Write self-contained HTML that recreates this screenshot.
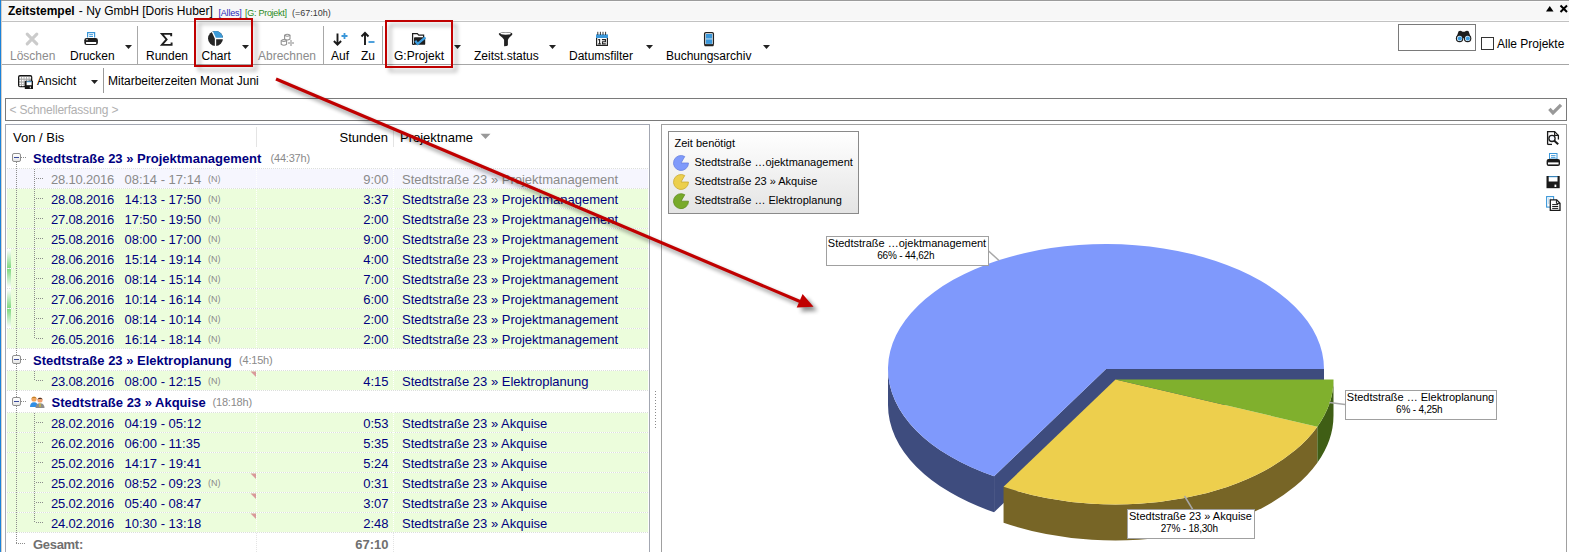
<!DOCTYPE html>
<html><head><meta charset="utf-8"><title>Zeitstempel</title>
<style>
html,body{margin:0;padding:0;}
body{width:1569px;height:552px;overflow:hidden;position:relative;background:#fff;font-family:"Liberation Sans", sans-serif;}
.t{position:absolute;white-space:pre;font-family:"Liberation Sans", sans-serif;}
.r{position:absolute;}
svg{position:absolute;overflow:visible;}
</style></head><body>

<div class="r" style="left:0px;top:0px;width:1569px;height:1px;background:#9c9c9c;"></div>
<div class="r" style="left:2px;top:1px;width:1567px;height:1px;background:#fcfcfc;"></div>
<div class="r" style="left:2px;top:2px;width:1567px;height:18px;background:#f7f7f7;"></div>
<div class="r" style="left:2px;top:20px;width:1567px;height:1px;background:#fdfdfd;"></div>
<div class="r" style="left:2px;top:21px;width:1567px;height:1px;background:#c2c2c2;"></div>
<div class="t " style="left:8px;top:4.84px;font-size:12px;line-height:12px;font-weight:700;color:#000;">Zeitstempel</div>
<div class="t " style="left:75.5px;top:4.84px;font-size:12px;line-height:12px;font-weight:400;color:#000;"> - Ny GmbH [Doris Huber]</div>
<div class="t " style="left:218.5px;top:8.58px;font-size:9px;line-height:9px;font-weight:400;color:#2828b8;letter-spacing:-0.2px;">[Alles]</div>
<div class="t " style="left:245px;top:8.58px;font-size:9px;line-height:9px;font-weight:400;color:#2a8a1a;letter-spacing:-0.27px;">[G: Projekt]</div>
<div class="t " style="left:292px;top:8.58px;font-size:9px;line-height:9px;font-weight:400;color:#3a3a3a;">(=67:10h)</div>
<svg style="left:1545px;top:5px" width="10" height="8"><polygon points="1,6.5 8.5,6.5 4.75,1" fill="#000"/></svg>
<svg style="left:1559px;top:4px" width="10" height="10"><path d="M1.5 1.5 L8 8 M8 1.5 L1.5 8" stroke="#000" stroke-width="2"/></svg>
<div class="r" style="left:2px;top:64px;width:1567px;height:1px;background:#a6a6a6;"></div>
<svg style="left:25px;top:32px" width="14" height="14"><path d="M2.2 2.2 L11.8 11.8 M11.8 2.2 L2.2 11.8" stroke="#cbcbcb" stroke-width="3.1" stroke-linecap="round"/></svg>
<div class="t " style="left:10px;top:50.34px;font-size:12px;line-height:12px;font-weight:400;color:#8c8c8c;">Löschen</div>
<svg style="left:84px;top:31px" width="15" height="15">
<path d="M3.6 6.6 V1.6 H10.6 V6.6" fill="#fff" stroke="#3b97d9" stroke-width="1.2"/>
<rect x="5.2" y="3.2" width="3.8" height="1" fill="#3b97d9"/><rect x="5.2" y="5" width="3.8" height="1" fill="#3b97d9"/>
<rect x="0.3" y="6.9" width="13.6" height="7.1" rx="2.3" fill="#1e1e1e"/>
<rect x="2" y="10.9" width="10.2" height="2.1" rx="0.4" fill="#fff"/>
<rect x="2.1" y="8.2" width="1.8" height="1" fill="#e0e0e0"/>
</svg>
<div class="t " style="left:70px;top:50.34px;font-size:12px;line-height:12px;font-weight:400;color:#000;">Drucken</div>
<svg style="left:125px;top:45px" width="8" height="5"><polygon points="0,0 7,0 3.5,4" fill="#222"/></svg>
<div class="r" style="left:137px;top:26px;width:1px;height:38px;background:#a8a8a8;"></div>
<svg style="left:160px;top:32px" width="14" height="15"><path d="M11.2 4.2 V1.9 H1.9 L6.6 7.4 L1.9 12.9 H11.6 V10.6" fill="none" stroke="#1e1e1e" stroke-width="1.9" stroke-linejoin="miter" stroke-miterlimit="3"/></svg>
<div class="t " style="left:146px;top:50.34px;font-size:12px;line-height:12px;font-weight:400;color:#000;">Runden</div>
<svg style="left:207px;top:30px" width="17" height="17">
<circle cx="8.5" cy="8.5" r="7.5" fill="#262626"/>
<path d="M8.5 8.5 L16.0 8.5 A7.5 7.5 0 0 0 5.35 1.69 Z" fill="#3d9bd8"/>
<path d="M5.35 1.69 L8.5 8.5 L17.0 8.5 M8.5 8.5 V17.0" fill="none" stroke="#fff" stroke-width="1.3"/>
</svg>
<div class="t " style="left:201.5px;top:50.34px;font-size:12px;line-height:12px;font-weight:400;color:#000;">Chart</div>
<svg style="left:242px;top:45px" width="8" height="5"><polygon points="0,0 7,0 3.5,4" fill="#222"/></svg>
<svg style="left:280px;top:33px" width="16" height="14">
<g fill="#fff" stroke="#929292" stroke-width="1.1">
<path d="M4.6 2.3 Q7.3 0.3 10 2.3 V6 Q7.3 8 4.6 6 Z"/><path d="M4.6 2.3 Q7.3 4.2 10 2.3" fill="none"/>
<path d="M1.2 7.6 Q3.9 5.6 6.6 7.6 V11.2 Q3.9 13.2 1.2 11.2 Z"/><path d="M1.2 7.6 Q3.9 9.5 6.6 7.6" fill="none"/>
</g>
<path d="M11 7 V13 M8 10 H14" stroke="#c2c2c2" stroke-width="1.9"/>
</svg>
<div class="t " style="left:258px;top:50.34px;font-size:12px;line-height:12px;font-weight:400;color:#8c8c8c;">Abrechnen</div>
<div class="r" style="left:323px;top:26px;width:1px;height:38px;background:#a8a8a8;"></div>
<svg style="left:332px;top:31px" width="16" height="16">
<path d="M5.5 2.5 V13.5 M1.9 10 L5.5 13.6 L9.1 10" fill="none" stroke="#1a1a1a" stroke-width="1.9"/>
<path d="M12.5 2 V8 M9.5 5 H15.5" stroke="#3b97d9" stroke-width="1.8"/>
</svg>
<div class="t " style="left:331px;top:50.34px;font-size:12px;line-height:12px;font-weight:400;color:#000;">Auf</div>
<svg style="left:360px;top:31px" width="16" height="16">
<path d="M5 14 V2 M1.5 5.5 L5 1.8 L8.5 5.5" fill="none" stroke="#1a1a1a" stroke-width="1.9"/>
<path d="M8.5 11 H14.5" stroke="#3b97d9" stroke-width="1.8"/>
</svg>
<div class="t " style="left:361px;top:50.34px;font-size:12px;line-height:12px;font-weight:400;color:#000;">Zu</div>
<div class="r" style="left:382px;top:26px;width:1px;height:38px;background:#a8a8a8;"></div>
<svg style="left:411px;top:32px" width="17" height="15">
<path d="M1.6 12.4 V1.6 H6.3 L7.8 3.1 H12.6 V5.5" fill="none" stroke="#1e1e1e" stroke-width="1.25"/>
<path d="M1.6 12.4 H3.5" fill="none" stroke="#1e1e1e" stroke-width="1.25"/>
<rect x="3" y="5.2" width="11.2" height="7.6" rx="0.9" fill="#1e1e1e"/>
<path d="M4.3 8.8 L6.6 11.9 L14.4 5.4" fill="none" stroke="#3d9ee0" stroke-width="2.3"/>
</svg>
<div class="t " style="left:394px;top:50.34px;font-size:12px;line-height:12px;font-weight:400;color:#000;">G:Projekt</div>
<svg style="left:454px;top:44.5px" width="8" height="5"><polygon points="0,0 7,0 3.5,4" fill="#222"/></svg>
<svg style="left:498px;top:31px" width="16" height="16">
<path d="M0.8 2.9 C0.8 0.6 14.4 0.6 14.4 2.9 C14.4 4.5 10.2 6.5 9.9 9.2 V14.2 Q9.5 15.2 6.1 15.2 V9.2 C5.8 6.5 0.8 4.5 0.8 2.9 Z" fill="#222"/>
<ellipse cx="7.6" cy="2.6" rx="5.3" ry="1.15" fill="#fff"/>
</svg>
<div class="t " style="left:474px;top:50.34px;font-size:12px;line-height:12px;font-weight:400;color:#000;">Zeitst.status</div>
<svg style="left:549px;top:44.5px" width="8" height="5"><polygon points="0,0 7,0 3.5,4" fill="#222"/></svg>
<svg style="left:595px;top:31px" width="15" height="16">
<rect x="1.6" y="4.6" width="10.8" height="9.8" fill="#fff" stroke="#222" stroke-width="1.2"/>
<rect x="1" y="3.4" width="12" height="3.6" fill="#3b97d9"/>
<path d="M2.8 0.8 V4 M5.4 0.8 V4 M8 0.8 V4 M10.6 0.8 V4" stroke="#222" stroke-width="0.9"/>
<path d="M3.2 8.6 H4.6 V12.9 M3.2 12.9 H5.8 M6.9 8.6 H10.4 V10.7 H7.5 V12.9 H10.8" fill="none" stroke="#222" stroke-width="1.15"/>
</svg>
<div class="t " style="left:569px;top:50.34px;font-size:12px;line-height:12px;font-weight:400;color:#000;">Datumsfilter</div>
<svg style="left:645.5px;top:44.5px" width="8" height="5"><polygon points="0,0 7,0 3.5,4" fill="#222"/></svg>
<svg style="left:703px;top:31px" width="12" height="16">
<rect x="1.6" y="1.6" width="8.8" height="12.4" rx="1.2" fill="#fff" stroke="#222" stroke-width="1.3"/>
<rect x="2.8" y="3" width="6.4" height="4.6" fill="#3b97d9"/><rect x="2.8" y="8.3" width="6.4" height="4.6" fill="#3b97d9"/>
<rect x="1.4" y="13.4" width="9.2" height="1.8" rx="0.6" fill="#222"/>
</svg>
<div class="t " style="left:666px;top:50.34px;font-size:12px;line-height:12px;font-weight:400;color:#000;">Buchungsarchiv</div>
<svg style="left:762.5px;top:44.5px" width="8" height="5"><polygon points="0,0 7,0 3.5,4" fill="#222"/></svg>
<div class="r" style="left:1398px;top:24px;width:76px;height:25px;border:1px solid #7a7a7a;background:#fff;"></div>
<svg style="left:1450px;top:26px" width="26" height="20">
<path d="M8.6 5.3 Q9.5 4.6 11.3 5 L12.6 5.8 H14.6 L15.9 5 Q17.7 4.6 18.6 5.3 L21 12 H6.2 Z" fill="#1e1e1e"/>
<circle cx="9.6" cy="12.4" r="3.75" fill="#1e1e1e"/><circle cx="17.6" cy="12.4" r="3.75" fill="#1e1e1e"/>
<circle cx="9.6" cy="12.4" r="2.6" fill="#d8ecfa"/><circle cx="17.6" cy="12.4" r="2.6" fill="#d8ecfa"/>
<circle cx="9.8" cy="12.6" r="2" fill="#3d9ee0"/><circle cx="17.8" cy="12.6" r="2" fill="#3d9ee0"/>
</svg>
<div class="r" style="left:1481px;top:37px;width:11px;height:11px;border:1px solid #333;background:#fff;"></div>
<div class="t " style="left:1497px;top:37.84px;font-size:12px;line-height:12px;font-weight:400;color:#000;">Alle Projekte</div>
<svg style="left:14px;top:72px" width="22" height="20">
<rect x="4.65" y="3.65" width="13" height="11" rx="1.3" fill="#a9a9a9" stroke="#151515" stroke-width="1.3"/>
<g fill="#fff"><rect x="5.5" y="5" width="1.6" height="1.6"/><rect x="8" y="5" width="1.6" height="1.6"/><rect x="10.5" y="5" width="1.6" height="1.6"/><rect x="13" y="5" width="1.6" height="1.6"/><rect x="15.5" y="5" width="1.6" height="1.6"/>
<rect x="5.5" y="7.8" width="1.6" height="1.6"/><rect x="8" y="7.8" width="1.6" height="1.6"/><rect x="10.5" y="7.8" width="1.6" height="1.6"/><rect x="13" y="7.8" width="1.6" height="1.6"/>
<rect x="5.5" y="10.6" width="1.6" height="1.6"/><rect x="8" y="10.6" width="1.6" height="1.6"/>
<rect x="5.5" y="13" width="1.6" height="1.2"/><rect x="8" y="13" width="1.6" height="1.2"/></g>
<rect x="10.8" y="8.8" width="8.2" height="8.2" fill="#151515"/>
<rect x="12.6" y="9.6" width="5" height="3.6" fill="#fff"/><rect x="12.6" y="9.3" width="5" height="0.9" fill="#3b97d9"/>
<rect x="15.8" y="14.6" width="1.2" height="1.6" fill="#ddd"/>
</svg>
<div class="t " style="left:37px;top:75.34px;font-size:12px;line-height:12px;font-weight:400;color:#000;">Ansicht</div>
<svg style="left:91px;top:79.5px" width="8" height="5"><polygon points="0,0 7,0 3.5,4" fill="#222"/></svg>
<div class="r" style="left:103px;top:68px;width:1px;height:25px;background:#9a9a9a;"></div>
<div class="t " style="left:108px;top:75.34px;font-size:12px;line-height:12px;font-weight:400;color:#000;">Mitarbeiterzeiten Monat Juni</div>
<div class="r" style="left:5px;top:98px;width:1560px;height:21px;border:1px solid #7a7a7a;background:#fff;"></div>
<div class="t " style="left:9.5px;top:104.34px;font-size:12px;line-height:12px;font-weight:400;color:#b0b0b0;letter-spacing:-0.2px;">&lt; Schnellerfassung &gt;</div>
<svg style="left:1547px;top:102px" width="16" height="14"><path d="M2.4 6.9 L6 10.9 L14 2.9" fill="none" stroke="#999" stroke-width="3.3"/></svg>
<div class="r" style="left:5px;top:124px;width:643px;height:435px;border:1px solid #a3a7b2;background:#fff;"></div>
<div class="t " style="left:13px;top:130.60px;font-size:13px;line-height:13px;font-weight:400;color:#000;">Von / Bis</div>
<div class="r" style="left:256px;top:127px;width:1px;height:20px;background:#e4e4e4;"></div>
<div class="r" style="left:393px;top:127px;width:1px;height:20px;background:#e4e4e4;"></div>
<div class="t " style="right:1181px;text-align:right;top:130.60px;font-size:13px;line-height:13px;font-weight:400;color:#000;">Stunden</div>
<div class="t " style="left:400px;top:130.60px;font-size:13px;line-height:13px;font-weight:400;color:#000;">Projektname</div>
<svg style="left:480px;top:133px" width="11" height="7"><polygon points="0.5,0.8 10.5,0.8 5.5,6" fill="#999999"/></svg>
<div class="r" style="left:21px;top:157px;width:5px;height:1px;background:repeating-linear-gradient(90deg,#8c8c8c 0 1px,transparent 1px 2px);"></div>
<div class="t " style="left:33px;top:151.80px;font-size:13px;line-height:13px;font-weight:700;color:#000080;">Stedtstraße 23 » Projektmanagement</div>
<div class="t " style="left:270.5px;top:152.99px;font-size:11px;line-height:11px;font-weight:400;color:#8a8a8a;letter-spacing:-0.2px;">(44:37h)</div>
<div class="r" style="left:7px;top:168px;width:641px;height:20px;background:#f6f6fe;"></div>
<div class="r" style="left:7px;top:168px;width:641px;height:1px;background:repeating-linear-gradient(90deg,#dcdfdc 0 1px,#ffffff 1px 2px);"></div>
<div class="r" style="left:256px;top:168px;width:1px;height:20px;background:repeating-linear-gradient(180deg,#ffffff 0 1px,transparent 1px 2px);"></div>
<div class="r" style="left:393px;top:168px;width:1px;height:20px;background:repeating-linear-gradient(180deg,#ffffff 0 1px,transparent 1px 2px);"></div>
<div class="r" style="left:36px;top:178px;width:7px;height:1px;background:repeating-linear-gradient(90deg,#8c8c8c 0 1px,transparent 1px 2px);"></div>
<div class="t " style="left:51px;top:172.80px;font-size:13px;line-height:13px;font-weight:400;color:#8a8a8a;letter-spacing:-0.2px;">28.10.2016</div>
<div class="t " style="left:124.5px;top:172.80px;font-size:13px;line-height:13px;font-weight:400;color:#8a8a8a;">08:14 - 17:14</div>
<div class="t " style="left:208px;top:174.98px;font-size:9px;line-height:9px;font-weight:400;color:#8a8a8a;">(N)</div>
<div class="t " style="right:1180.5px;text-align:right;top:172.80px;font-size:13px;line-height:13px;font-weight:400;color:#8a8a8a;">9:00</div>
<div class="t " style="left:402px;top:172.80px;font-size:13px;line-height:13px;font-weight:400;color:#8a8a8a;">Stedtstraße 23 » Projektmanagement</div>
<div class="r" style="left:7px;top:188px;width:641px;height:20px;background:#ecfddc;"></div>
<div class="r" style="left:7px;top:188px;width:641px;height:1px;background:repeating-linear-gradient(90deg,#dcdfdc 0 1px,#ffffff 1px 2px);"></div>
<div class="r" style="left:256px;top:188px;width:1px;height:20px;background:repeating-linear-gradient(180deg,#ffffff 0 1px,transparent 1px 2px);"></div>
<div class="r" style="left:393px;top:188px;width:1px;height:20px;background:repeating-linear-gradient(180deg,#ffffff 0 1px,transparent 1px 2px);"></div>
<div class="r" style="left:36px;top:198px;width:7px;height:1px;background:repeating-linear-gradient(90deg,#8c8c8c 0 1px,transparent 1px 2px);"></div>
<div class="t " style="left:51px;top:192.80px;font-size:13px;line-height:13px;font-weight:400;color:#000080;letter-spacing:-0.2px;">28.08.2016</div>
<div class="t " style="left:124.5px;top:192.80px;font-size:13px;line-height:13px;font-weight:400;color:#000080;">14:13 - 17:50</div>
<div class="t " style="left:208px;top:194.98px;font-size:9px;line-height:9px;font-weight:400;color:#8a8a8a;">(N)</div>
<div class="t " style="right:1180.5px;text-align:right;top:192.80px;font-size:13px;line-height:13px;font-weight:400;color:#000080;">3:37</div>
<div class="t " style="left:402px;top:192.80px;font-size:13px;line-height:13px;font-weight:400;color:#000080;">Stedtstraße 23 » Projektmanagement</div>
<div class="r" style="left:7px;top:208px;width:641px;height:20px;background:#ecfddc;"></div>
<div class="r" style="left:7px;top:208px;width:641px;height:1px;background:repeating-linear-gradient(90deg,#dcdfdc 0 1px,#ffffff 1px 2px);"></div>
<div class="r" style="left:256px;top:208px;width:1px;height:20px;background:repeating-linear-gradient(180deg,#ffffff 0 1px,transparent 1px 2px);"></div>
<div class="r" style="left:393px;top:208px;width:1px;height:20px;background:repeating-linear-gradient(180deg,#ffffff 0 1px,transparent 1px 2px);"></div>
<div class="r" style="left:36px;top:218px;width:7px;height:1px;background:repeating-linear-gradient(90deg,#8c8c8c 0 1px,transparent 1px 2px);"></div>
<div class="t " style="left:51px;top:212.80px;font-size:13px;line-height:13px;font-weight:400;color:#000080;letter-spacing:-0.2px;">27.08.2016</div>
<div class="t " style="left:124.5px;top:212.80px;font-size:13px;line-height:13px;font-weight:400;color:#000080;">17:50 - 19:50</div>
<div class="t " style="left:208px;top:214.98px;font-size:9px;line-height:9px;font-weight:400;color:#8a8a8a;">(N)</div>
<div class="t " style="right:1180.5px;text-align:right;top:212.80px;font-size:13px;line-height:13px;font-weight:400;color:#000080;">2:00</div>
<div class="t " style="left:402px;top:212.80px;font-size:13px;line-height:13px;font-weight:400;color:#000080;">Stedtstraße 23 » Projektmanagement</div>
<div class="r" style="left:7px;top:228px;width:641px;height:20px;background:#ecfddc;"></div>
<div class="r" style="left:7px;top:228px;width:641px;height:1px;background:repeating-linear-gradient(90deg,#dcdfdc 0 1px,#ffffff 1px 2px);"></div>
<div class="r" style="left:256px;top:228px;width:1px;height:20px;background:repeating-linear-gradient(180deg,#ffffff 0 1px,transparent 1px 2px);"></div>
<div class="r" style="left:393px;top:228px;width:1px;height:20px;background:repeating-linear-gradient(180deg,#ffffff 0 1px,transparent 1px 2px);"></div>
<div class="r" style="left:36px;top:238px;width:7px;height:1px;background:repeating-linear-gradient(90deg,#8c8c8c 0 1px,transparent 1px 2px);"></div>
<div class="t " style="left:51px;top:232.80px;font-size:13px;line-height:13px;font-weight:400;color:#000080;letter-spacing:-0.2px;">25.08.2016</div>
<div class="t " style="left:124.5px;top:232.80px;font-size:13px;line-height:13px;font-weight:400;color:#000080;">08:00 - 17:00</div>
<div class="t " style="left:208px;top:234.98px;font-size:9px;line-height:9px;font-weight:400;color:#8a8a8a;">(N)</div>
<div class="t " style="right:1180.5px;text-align:right;top:232.80px;font-size:13px;line-height:13px;font-weight:400;color:#000080;">9:00</div>
<div class="t " style="left:402px;top:232.80px;font-size:13px;line-height:13px;font-weight:400;color:#000080;">Stedtstraße 23 » Projektmanagement</div>
<div class="r" style="left:7px;top:248px;width:641px;height:20px;background:#ecfddc;"></div>
<div class="r" style="left:7px;top:248px;width:641px;height:1px;background:repeating-linear-gradient(90deg,#dcdfdc 0 1px,#ffffff 1px 2px);"></div>
<div class="r" style="left:256px;top:248px;width:1px;height:20px;background:repeating-linear-gradient(180deg,#ffffff 0 1px,transparent 1px 2px);"></div>
<div class="r" style="left:393px;top:248px;width:1px;height:20px;background:repeating-linear-gradient(180deg,#ffffff 0 1px,transparent 1px 2px);"></div>
<div class="r" style="left:36px;top:258px;width:7px;height:1px;background:repeating-linear-gradient(90deg,#8c8c8c 0 1px,transparent 1px 2px);"></div>
<div class="t " style="left:51px;top:252.80px;font-size:13px;line-height:13px;font-weight:400;color:#000080;letter-spacing:-0.2px;">28.06.2016</div>
<div class="t " style="left:124.5px;top:252.80px;font-size:13px;line-height:13px;font-weight:400;color:#000080;">15:14 - 19:14</div>
<div class="t " style="left:208px;top:254.98px;font-size:9px;line-height:9px;font-weight:400;color:#8a8a8a;">(N)</div>
<div class="t " style="right:1180.5px;text-align:right;top:252.80px;font-size:13px;line-height:13px;font-weight:400;color:#000080;">4:00</div>
<div class="t " style="left:402px;top:252.80px;font-size:13px;line-height:13px;font-weight:400;color:#000080;">Stedtstraße 23 » Projektmanagement</div>
<div class="r" style="left:7px;top:268px;width:641px;height:20px;background:#ecfddc;"></div>
<div class="r" style="left:7px;top:268px;width:641px;height:1px;background:repeating-linear-gradient(90deg,#dcdfdc 0 1px,#ffffff 1px 2px);"></div>
<div class="r" style="left:256px;top:268px;width:1px;height:20px;background:repeating-linear-gradient(180deg,#ffffff 0 1px,transparent 1px 2px);"></div>
<div class="r" style="left:393px;top:268px;width:1px;height:20px;background:repeating-linear-gradient(180deg,#ffffff 0 1px,transparent 1px 2px);"></div>
<div class="r" style="left:36px;top:278px;width:7px;height:1px;background:repeating-linear-gradient(90deg,#8c8c8c 0 1px,transparent 1px 2px);"></div>
<div class="t " style="left:51px;top:272.80px;font-size:13px;line-height:13px;font-weight:400;color:#000080;letter-spacing:-0.2px;">28.06.2016</div>
<div class="t " style="left:124.5px;top:272.80px;font-size:13px;line-height:13px;font-weight:400;color:#000080;">08:14 - 15:14</div>
<div class="t " style="left:208px;top:274.98px;font-size:9px;line-height:9px;font-weight:400;color:#8a8a8a;">(N)</div>
<div class="t " style="right:1180.5px;text-align:right;top:272.80px;font-size:13px;line-height:13px;font-weight:400;color:#000080;">7:00</div>
<div class="t " style="left:402px;top:272.80px;font-size:13px;line-height:13px;font-weight:400;color:#000080;">Stedtstraße 23 » Projektmanagement</div>
<div class="r" style="left:7px;top:288px;width:641px;height:20px;background:#ecfddc;"></div>
<div class="r" style="left:7px;top:288px;width:641px;height:1px;background:repeating-linear-gradient(90deg,#dcdfdc 0 1px,#ffffff 1px 2px);"></div>
<div class="r" style="left:256px;top:288px;width:1px;height:20px;background:repeating-linear-gradient(180deg,#ffffff 0 1px,transparent 1px 2px);"></div>
<div class="r" style="left:393px;top:288px;width:1px;height:20px;background:repeating-linear-gradient(180deg,#ffffff 0 1px,transparent 1px 2px);"></div>
<div class="r" style="left:36px;top:298px;width:7px;height:1px;background:repeating-linear-gradient(90deg,#8c8c8c 0 1px,transparent 1px 2px);"></div>
<div class="t " style="left:51px;top:292.80px;font-size:13px;line-height:13px;font-weight:400;color:#000080;letter-spacing:-0.2px;">27.06.2016</div>
<div class="t " style="left:124.5px;top:292.80px;font-size:13px;line-height:13px;font-weight:400;color:#000080;">10:14 - 16:14</div>
<div class="t " style="left:208px;top:294.98px;font-size:9px;line-height:9px;font-weight:400;color:#8a8a8a;">(N)</div>
<div class="t " style="right:1180.5px;text-align:right;top:292.80px;font-size:13px;line-height:13px;font-weight:400;color:#000080;">6:00</div>
<div class="t " style="left:402px;top:292.80px;font-size:13px;line-height:13px;font-weight:400;color:#000080;">Stedtstraße 23 » Projektmanagement</div>
<div class="r" style="left:7px;top:308px;width:641px;height:20px;background:#ecfddc;"></div>
<div class="r" style="left:7px;top:308px;width:641px;height:1px;background:repeating-linear-gradient(90deg,#dcdfdc 0 1px,#ffffff 1px 2px);"></div>
<div class="r" style="left:256px;top:308px;width:1px;height:20px;background:repeating-linear-gradient(180deg,#ffffff 0 1px,transparent 1px 2px);"></div>
<div class="r" style="left:393px;top:308px;width:1px;height:20px;background:repeating-linear-gradient(180deg,#ffffff 0 1px,transparent 1px 2px);"></div>
<div class="r" style="left:36px;top:318px;width:7px;height:1px;background:repeating-linear-gradient(90deg,#8c8c8c 0 1px,transparent 1px 2px);"></div>
<div class="t " style="left:51px;top:312.80px;font-size:13px;line-height:13px;font-weight:400;color:#000080;letter-spacing:-0.2px;">27.06.2016</div>
<div class="t " style="left:124.5px;top:312.80px;font-size:13px;line-height:13px;font-weight:400;color:#000080;">08:14 - 10:14</div>
<div class="t " style="left:208px;top:314.98px;font-size:9px;line-height:9px;font-weight:400;color:#8a8a8a;">(N)</div>
<div class="t " style="right:1180.5px;text-align:right;top:312.80px;font-size:13px;line-height:13px;font-weight:400;color:#000080;">2:00</div>
<div class="t " style="left:402px;top:312.80px;font-size:13px;line-height:13px;font-weight:400;color:#000080;">Stedtstraße 23 » Projektmanagement</div>
<div class="r" style="left:7px;top:328px;width:641px;height:20px;background:#ecfddc;"></div>
<div class="r" style="left:7px;top:328px;width:641px;height:1px;background:repeating-linear-gradient(90deg,#dcdfdc 0 1px,#ffffff 1px 2px);"></div>
<div class="r" style="left:256px;top:328px;width:1px;height:20px;background:repeating-linear-gradient(180deg,#ffffff 0 1px,transparent 1px 2px);"></div>
<div class="r" style="left:393px;top:328px;width:1px;height:20px;background:repeating-linear-gradient(180deg,#ffffff 0 1px,transparent 1px 2px);"></div>
<div class="r" style="left:7px;top:348px;width:641px;height:1px;background:repeating-linear-gradient(90deg,#dcdfdc 0 1px,#ffffff 1px 2px);"></div>
<div class="r" style="left:36px;top:338px;width:7px;height:1px;background:repeating-linear-gradient(90deg,#8c8c8c 0 1px,transparent 1px 2px);"></div>
<div class="t " style="left:51px;top:332.80px;font-size:13px;line-height:13px;font-weight:400;color:#000080;letter-spacing:-0.2px;">26.05.2016</div>
<div class="t " style="left:124.5px;top:332.80px;font-size:13px;line-height:13px;font-weight:400;color:#000080;">16:14 - 18:14</div>
<div class="t " style="left:208px;top:334.98px;font-size:9px;line-height:9px;font-weight:400;color:#8a8a8a;">(N)</div>
<div class="t " style="right:1180.5px;text-align:right;top:332.80px;font-size:13px;line-height:13px;font-weight:400;color:#000080;">2:00</div>
<div class="t " style="left:402px;top:332.80px;font-size:13px;line-height:13px;font-weight:400;color:#000080;">Stedtstraße 23 » Projektmanagement</div>
<div class="r" style="left:7px;top:249px;width:4px;height:19px;background:linear-gradient(180deg,#ffffff,#7fd87f);"></div>
<div class="r" style="left:7px;top:269px;width:4px;height:19px;background:linear-gradient(0deg,#ffffff,#7fd87f);"></div>
<div class="r" style="left:7px;top:289px;width:4px;height:19px;background:linear-gradient(180deg,#ffffff,#7fd87f);"></div>
<div class="r" style="left:7px;top:309px;width:4px;height:19px;background:linear-gradient(0deg,#ffffff,#7fd87f);"></div>
<div class="r" style="left:34px;top:169px;width:1px;height:170px;background:repeating-linear-gradient(180deg,#8c8c8c 0 1px,transparent 1px 2px);"></div>
<div class="r" style="left:21px;top:359px;width:5px;height:1px;background:repeating-linear-gradient(90deg,#8c8c8c 0 1px,transparent 1px 2px);"></div>
<div class="t " style="left:33px;top:353.80px;font-size:13px;line-height:13px;font-weight:700;color:#000080;">Stedtstraße 23 » Elektroplanung</div>
<div class="t " style="left:239px;top:354.99px;font-size:11px;line-height:11px;font-weight:400;color:#8a8a8a;letter-spacing:-0.2px;">(4:15h)</div>
<div class="r" style="left:7px;top:370px;width:641px;height:20px;background:#ecfddc;"></div>
<div class="r" style="left:7px;top:370px;width:641px;height:1px;background:repeating-linear-gradient(90deg,#dcdfdc 0 1px,#ffffff 1px 2px);"></div>
<div class="r" style="left:256px;top:370px;width:1px;height:20px;background:repeating-linear-gradient(180deg,#ffffff 0 1px,transparent 1px 2px);"></div>
<div class="r" style="left:393px;top:370px;width:1px;height:20px;background:repeating-linear-gradient(180deg,#ffffff 0 1px,transparent 1px 2px);"></div>
<div class="r" style="left:7px;top:390px;width:641px;height:1px;background:repeating-linear-gradient(90deg,#dcdfdc 0 1px,#ffffff 1px 2px);"></div>
<div class="r" style="left:36px;top:380px;width:7px;height:1px;background:repeating-linear-gradient(90deg,#8c8c8c 0 1px,transparent 1px 2px);"></div>
<div class="t " style="left:51px;top:374.80px;font-size:13px;line-height:13px;font-weight:400;color:#000080;letter-spacing:-0.2px;">23.08.2016</div>
<div class="t " style="left:124.5px;top:374.80px;font-size:13px;line-height:13px;font-weight:400;color:#000080;">08:00 - 12:15</div>
<div class="t " style="left:208px;top:376.98px;font-size:9px;line-height:9px;font-weight:400;color:#8a8a8a;">(N)</div>
<div class="t " style="right:1180.5px;text-align:right;top:374.80px;font-size:13px;line-height:13px;font-weight:400;color:#000080;">4:15</div>
<div class="t " style="left:402px;top:374.80px;font-size:13px;line-height:13px;font-weight:400;color:#000080;">Stedtstraße 23 » Elektroplanung</div>
<svg style="left:250px;top:371px" width="7" height="7"><polygon points="0.5,0.5 6,0.5 6,6" fill="#d99a9a"/></svg>
<div class="r" style="left:34px;top:371px;width:1px;height:10px;background:repeating-linear-gradient(180deg,#8c8c8c 0 1px,transparent 1px 2px);"></div>
<div class="r" style="left:21px;top:401px;width:5px;height:1px;background:repeating-linear-gradient(90deg,#8c8c8c 0 1px,transparent 1px 2px);"></div>
<svg style="left:30px;top:396px" width="15" height="12">
<circle cx="4" cy="3" r="2.6" fill="#f0a35a"/><path d="M1.3 2.5 Q4 -0.8 6.8 2.5 Q4 1 1.3 2.5Z" fill="#b07a20"/>
<path d="M0 11 Q0 6.5 4 6.3 Q8 6.5 8 11Z" fill="#2f8fe6"/>
<circle cx="10" cy="4" r="2.6" fill="#f0a070"/><path d="M7.3 3.5 Q10 0.2 12.8 3.5 Q10 2 7.3 3.5Z" fill="#222"/>
<path d="M5.5 12 Q5.5 7.3 10 7.2 Q14.5 7.3 14.5 12Z" fill="#8d8d8d"/><rect x="9.5" y="7.5" width="1" height="3.5" fill="#e8d020"/>
</svg>
<div class="t " style="left:51.5px;top:395.80px;font-size:13px;line-height:13px;font-weight:700;color:#000080;">Stedtstraße 23 » Akquise</div>
<div class="t " style="left:212.5px;top:396.99px;font-size:11px;line-height:11px;font-weight:400;color:#8a8a8a;letter-spacing:-0.2px;">(18:18h)</div>
<div class="r" style="left:7px;top:412px;width:641px;height:20px;background:#ecfddc;"></div>
<div class="r" style="left:7px;top:412px;width:641px;height:1px;background:repeating-linear-gradient(90deg,#dcdfdc 0 1px,#ffffff 1px 2px);"></div>
<div class="r" style="left:256px;top:412px;width:1px;height:20px;background:repeating-linear-gradient(180deg,#ffffff 0 1px,transparent 1px 2px);"></div>
<div class="r" style="left:393px;top:412px;width:1px;height:20px;background:repeating-linear-gradient(180deg,#ffffff 0 1px,transparent 1px 2px);"></div>
<div class="r" style="left:36px;top:422px;width:7px;height:1px;background:repeating-linear-gradient(90deg,#8c8c8c 0 1px,transparent 1px 2px);"></div>
<div class="t " style="left:51px;top:416.80px;font-size:13px;line-height:13px;font-weight:400;color:#000080;letter-spacing:-0.2px;">28.02.2016</div>
<div class="t " style="left:124.5px;top:416.80px;font-size:13px;line-height:13px;font-weight:400;color:#000080;">04:19 - 05:12</div>
<div class="t " style="right:1180.5px;text-align:right;top:416.80px;font-size:13px;line-height:13px;font-weight:400;color:#000080;">0:53</div>
<div class="t " style="left:402px;top:416.80px;font-size:13px;line-height:13px;font-weight:400;color:#000080;">Stedtstraße 23 » Akquise</div>
<div class="r" style="left:7px;top:432px;width:641px;height:20px;background:#ecfddc;"></div>
<div class="r" style="left:7px;top:432px;width:641px;height:1px;background:repeating-linear-gradient(90deg,#dcdfdc 0 1px,#ffffff 1px 2px);"></div>
<div class="r" style="left:256px;top:432px;width:1px;height:20px;background:repeating-linear-gradient(180deg,#ffffff 0 1px,transparent 1px 2px);"></div>
<div class="r" style="left:393px;top:432px;width:1px;height:20px;background:repeating-linear-gradient(180deg,#ffffff 0 1px,transparent 1px 2px);"></div>
<div class="r" style="left:36px;top:442px;width:7px;height:1px;background:repeating-linear-gradient(90deg,#8c8c8c 0 1px,transparent 1px 2px);"></div>
<div class="t " style="left:51px;top:436.80px;font-size:13px;line-height:13px;font-weight:400;color:#000080;letter-spacing:-0.2px;">26.02.2016</div>
<div class="t " style="left:124.5px;top:436.80px;font-size:13px;line-height:13px;font-weight:400;color:#000080;">06:00 - 11:35</div>
<div class="t " style="right:1180.5px;text-align:right;top:436.80px;font-size:13px;line-height:13px;font-weight:400;color:#000080;">5:35</div>
<div class="t " style="left:402px;top:436.80px;font-size:13px;line-height:13px;font-weight:400;color:#000080;">Stedtstraße 23 » Akquise</div>
<div class="r" style="left:7px;top:452px;width:641px;height:20px;background:#ecfddc;"></div>
<div class="r" style="left:7px;top:452px;width:641px;height:1px;background:repeating-linear-gradient(90deg,#dcdfdc 0 1px,#ffffff 1px 2px);"></div>
<div class="r" style="left:256px;top:452px;width:1px;height:20px;background:repeating-linear-gradient(180deg,#ffffff 0 1px,transparent 1px 2px);"></div>
<div class="r" style="left:393px;top:452px;width:1px;height:20px;background:repeating-linear-gradient(180deg,#ffffff 0 1px,transparent 1px 2px);"></div>
<div class="r" style="left:36px;top:462px;width:7px;height:1px;background:repeating-linear-gradient(90deg,#8c8c8c 0 1px,transparent 1px 2px);"></div>
<div class="t " style="left:51px;top:456.80px;font-size:13px;line-height:13px;font-weight:400;color:#000080;letter-spacing:-0.2px;">25.02.2016</div>
<div class="t " style="left:124.5px;top:456.80px;font-size:13px;line-height:13px;font-weight:400;color:#000080;">14:17 - 19:41</div>
<div class="t " style="right:1180.5px;text-align:right;top:456.80px;font-size:13px;line-height:13px;font-weight:400;color:#000080;">5:24</div>
<div class="t " style="left:402px;top:456.80px;font-size:13px;line-height:13px;font-weight:400;color:#000080;">Stedtstraße 23 » Akquise</div>
<div class="r" style="left:7px;top:472px;width:641px;height:20px;background:#ecfddc;"></div>
<div class="r" style="left:7px;top:472px;width:641px;height:1px;background:repeating-linear-gradient(90deg,#dcdfdc 0 1px,#ffffff 1px 2px);"></div>
<div class="r" style="left:256px;top:472px;width:1px;height:20px;background:repeating-linear-gradient(180deg,#ffffff 0 1px,transparent 1px 2px);"></div>
<div class="r" style="left:393px;top:472px;width:1px;height:20px;background:repeating-linear-gradient(180deg,#ffffff 0 1px,transparent 1px 2px);"></div>
<div class="r" style="left:36px;top:482px;width:7px;height:1px;background:repeating-linear-gradient(90deg,#8c8c8c 0 1px,transparent 1px 2px);"></div>
<div class="t " style="left:51px;top:476.80px;font-size:13px;line-height:13px;font-weight:400;color:#000080;letter-spacing:-0.2px;">25.02.2016</div>
<div class="t " style="left:124.5px;top:476.80px;font-size:13px;line-height:13px;font-weight:400;color:#000080;">08:52 - 09:23</div>
<div class="t " style="left:208px;top:478.98px;font-size:9px;line-height:9px;font-weight:400;color:#8a8a8a;">(N)</div>
<div class="t " style="right:1180.5px;text-align:right;top:476.80px;font-size:13px;line-height:13px;font-weight:400;color:#000080;">0:31</div>
<div class="t " style="left:402px;top:476.80px;font-size:13px;line-height:13px;font-weight:400;color:#000080;">Stedtstraße 23 » Akquise</div>
<svg style="left:250px;top:473px" width="7" height="7"><polygon points="0.5,0.5 6,0.5 6,6" fill="#d99a9a"/></svg>
<div class="r" style="left:7px;top:492px;width:641px;height:20px;background:#ecfddc;"></div>
<div class="r" style="left:7px;top:492px;width:641px;height:1px;background:repeating-linear-gradient(90deg,#dcdfdc 0 1px,#ffffff 1px 2px);"></div>
<div class="r" style="left:256px;top:492px;width:1px;height:20px;background:repeating-linear-gradient(180deg,#ffffff 0 1px,transparent 1px 2px);"></div>
<div class="r" style="left:393px;top:492px;width:1px;height:20px;background:repeating-linear-gradient(180deg,#ffffff 0 1px,transparent 1px 2px);"></div>
<div class="r" style="left:36px;top:502px;width:7px;height:1px;background:repeating-linear-gradient(90deg,#8c8c8c 0 1px,transparent 1px 2px);"></div>
<div class="t " style="left:51px;top:496.80px;font-size:13px;line-height:13px;font-weight:400;color:#000080;letter-spacing:-0.2px;">25.02.2016</div>
<div class="t " style="left:124.5px;top:496.80px;font-size:13px;line-height:13px;font-weight:400;color:#000080;">05:40 - 08:47</div>
<div class="t " style="right:1180.5px;text-align:right;top:496.80px;font-size:13px;line-height:13px;font-weight:400;color:#000080;">3:07</div>
<div class="t " style="left:402px;top:496.80px;font-size:13px;line-height:13px;font-weight:400;color:#000080;">Stedtstraße 23 » Akquise</div>
<svg style="left:250px;top:493px" width="7" height="7"><polygon points="0.5,0.5 6,0.5 6,6" fill="#d99a9a"/></svg>
<div class="r" style="left:7px;top:512px;width:641px;height:20px;background:#ecfddc;"></div>
<div class="r" style="left:7px;top:512px;width:641px;height:1px;background:repeating-linear-gradient(90deg,#dcdfdc 0 1px,#ffffff 1px 2px);"></div>
<div class="r" style="left:256px;top:512px;width:1px;height:20px;background:repeating-linear-gradient(180deg,#ffffff 0 1px,transparent 1px 2px);"></div>
<div class="r" style="left:393px;top:512px;width:1px;height:20px;background:repeating-linear-gradient(180deg,#ffffff 0 1px,transparent 1px 2px);"></div>
<div class="r" style="left:7px;top:532px;width:641px;height:1px;background:repeating-linear-gradient(90deg,#dcdfdc 0 1px,#ffffff 1px 2px);"></div>
<div class="r" style="left:36px;top:522px;width:7px;height:1px;background:repeating-linear-gradient(90deg,#8c8c8c 0 1px,transparent 1px 2px);"></div>
<div class="t " style="left:51px;top:516.80px;font-size:13px;line-height:13px;font-weight:400;color:#000080;letter-spacing:-0.2px;">24.02.2016</div>
<div class="t " style="left:124.5px;top:516.80px;font-size:13px;line-height:13px;font-weight:400;color:#000080;">10:30 - 13:18</div>
<div class="t " style="right:1180.5px;text-align:right;top:516.80px;font-size:13px;line-height:13px;font-weight:400;color:#000080;">2:48</div>
<div class="t " style="left:402px;top:516.80px;font-size:13px;line-height:13px;font-weight:400;color:#000080;">Stedtstraße 23 » Akquise</div>
<svg style="left:250px;top:513px" width="7" height="7"><polygon points="0.5,0.5 6,0.5 6,6" fill="#d99a9a"/></svg>
<div class="r" style="left:34px;top:413px;width:1px;height:110px;background:repeating-linear-gradient(180deg,#8c8c8c 0 1px,transparent 1px 2px);"></div>
<div class="r" style="left:16px;top:162px;width:1px;height:381px;background:repeating-linear-gradient(180deg,#8c8c8c 0 1px,transparent 1px 2px);"></div>
<div class="r" style="left:16px;top:543px;width:10px;height:1px;background:repeating-linear-gradient(90deg,#8c8c8c 0 1px,transparent 1px 2px);"></div>
<div class="r" style="left:12px;top:153px;width:7px;height:7px;border:1px solid #8f8f8f;border-radius:2px;background:linear-gradient(#fff,#e6e6e6);"></div>
<div class="r" style="left:14px;top:157px;width:5px;height:1px;background:#3a4a9a;"></div>
<div class="r" style="left:12px;top:355px;width:7px;height:7px;border:1px solid #8f8f8f;border-radius:2px;background:linear-gradient(#fff,#e6e6e6);"></div>
<div class="r" style="left:14px;top:359px;width:5px;height:1px;background:#3a4a9a;"></div>
<div class="r" style="left:12px;top:397px;width:7px;height:7px;border:1px solid #8f8f8f;border-radius:2px;background:linear-gradient(#fff,#e6e6e6);"></div>
<div class="r" style="left:14px;top:401px;width:5px;height:1px;background:#3a4a9a;"></div>
<div class="t " style="left:33px;top:537.50px;font-size:13px;line-height:13px;font-weight:700;color:#6f6f6f;letter-spacing:-0.3px;">Gesamt:</div>
<div class="t " style="right:1180.5px;text-align:right;top:537.50px;font-size:13px;line-height:13px;font-weight:700;color:#6f6f6f;">67:10</div>
<div class="r" style="left:256px;top:533px;width:1px;height:20px;background:repeating-linear-gradient(180deg,#e4e4e4 0 1px,transparent 1px 2px);"></div>
<div class="r" style="left:393px;top:533px;width:1px;height:20px;background:repeating-linear-gradient(180deg,#e4e4e4 0 1px,transparent 1px 2px);"></div>
<div class="r" style="left:655px;top:391px;width:1px;height:1px;background:#8a8a8a;"></div>
<div class="r" style="left:655px;top:394px;width:1px;height:1px;background:#8a8a8a;"></div>
<div class="r" style="left:655px;top:397px;width:1px;height:1px;background:#8a8a8a;"></div>
<div class="r" style="left:655px;top:400px;width:1px;height:1px;background:#8a8a8a;"></div>
<div class="r" style="left:655px;top:403px;width:1px;height:1px;background:#8a8a8a;"></div>
<div class="r" style="left:655px;top:406px;width:1px;height:1px;background:#8a8a8a;"></div>
<div class="r" style="left:655px;top:409px;width:1px;height:1px;background:#8a8a8a;"></div>
<div class="r" style="left:655px;top:412px;width:1px;height:1px;background:#8a8a8a;"></div>
<div class="r" style="left:655px;top:415px;width:1px;height:1px;background:#8a8a8a;"></div>
<div class="r" style="left:655px;top:418px;width:1px;height:1px;background:#8a8a8a;"></div>
<div class="r" style="left:655px;top:421px;width:1px;height:1px;background:#8a8a8a;"></div>
<div class="r" style="left:655px;top:424px;width:1px;height:1px;background:#8a8a8a;"></div>
<div class="r" style="left:655px;top:427px;width:1px;height:1px;background:#8a8a8a;"></div>
<div class="r" style="left:661px;top:124px;width:904px;height:435px;border:1px solid #a0a0a0;background:#fff;"></div>
<div class="r" style="left:668px;top:131px;width:189px;height:81px;border:1px solid #8a8a8a;background:linear-gradient(#ffffff,#e4e4e4);"></div>
<div class="t " style="left:674.5px;top:138.29px;font-size:11px;line-height:11px;font-weight:400;color:#000;">Zeit benötigt</div>
<svg style="left:0;top:0" width="1" height="1"><path d="M681 163 L684.75 156.50 A7.5 7.5 0 1 0 688.50 163.00 Z" fill="#7f9afb" stroke="#6a82de" stroke-width="0.8"/></svg>
<svg style="left:0;top:0" width="1" height="1"><path d="M681 182 L684.75 175.50 A7.5 7.5 0 1 0 688.50 182.00 Z" fill="#eccf4c" stroke="#c9ab34" stroke-width="0.8"/></svg>
<svg style="left:0;top:0" width="1" height="1"><path d="M681 201.2 L684.75 194.70 A7.5 7.5 0 1 0 688.50 201.20 Z" fill="#78aa2a" stroke="#5f8c1e" stroke-width="0.8"/></svg>
<div class="t " style="left:694.5px;top:156.89px;font-size:11px;line-height:11px;font-weight:400;color:#000;">Stedtstraße …ojektmanagement</div>
<div class="t " style="left:694.5px;top:175.69px;font-size:11px;line-height:11px;font-weight:400;color:#000;">Stedtstraße 23 » Akquise</div>
<div class="t " style="left:694.5px;top:195.29px;font-size:11px;line-height:11px;font-weight:400;color:#000;">Stedtstraße … Elektroplanung</div>
<svg style="left:0;top:0" width="1569" height="552"><path d="M888.00 369.00 A218 125 0 0 0 994.05 476.26 L994.05 512.26 A218 125 0 0 1 888.00 405.00 Z" fill="#3e4c7e"/><path d="M1106 369 L1324.00 369.00 L1324.00 405.00 L1106 405 Z" fill="#3e4c7e"/><path d="M1106 369 L994.05 476.26 L994.05 512.26 L1106 405 Z" fill="#3e4c7e"/><path d="M1106 369 L1324.00 369.00 A218 125 0 1 0 994.05 476.26 Z" fill="#7f99fc"/><path d="M1003.55 486.76 A218 125 0 0 0 1317.34 426.73 L1317.34 462.73 A218 125 0 0 1 1003.55 522.76 Z" fill="#776526"/><path d="M1317.34 426.73 A218 125 0 0 0 1333.50 379.50 L1333.50 415.50 A218 125 0 0 1 1317.34 462.73 Z" fill="#3f5e15"/><path d="M1115.5 379.5 L1003.55 486.76 A218 125 0 0 0 1317.34 426.73 Z" fill="#edcf4d"/><path d="M1115.5 379.5 L1317.34 426.73 A218 125 0 0 0 1333.50 379.50 Z" fill="#80b02d"/><path d="M988 250.5 L999 260.5" stroke="#a8a8a8" stroke-width="1.5"/><path d="M1329.5 402.5 L1345 404.5" stroke="#a8a8a8" stroke-width="1.5"/><path d="M1184.5 496 L1193 510" stroke="#a8a8a8" stroke-width="1.5"/></svg>
<div class="r" style="left:826px;top:236px;width:161px;height:28px;border:1px solid #a0a0a0;background:#fff;"></div>
<div class="t " style="left:607.0px;width:600px;text-align:center;top:237.79px;font-size:11px;line-height:11px;font-weight:400;color:#000;">Stedtstraße …ojektmanagement</div>
<div class="t " style="left:605.8px;width:600px;text-align:center;top:250.84px;font-size:10px;line-height:10px;font-weight:400;color:#000;letter-spacing:-0.2px;">66% - 44,62h</div>
<div class="r" style="left:1345px;top:390px;width:150px;height:28px;border:1px solid #a0a0a0;background:#fff;"></div>
<div class="t " style="left:1120.5px;width:600px;text-align:center;top:392.29px;font-size:11px;line-height:11px;font-weight:400;color:#000;">Stedtstraße … Elektroplanung</div>
<div class="t " style="left:1119.3px;width:600px;text-align:center;top:404.74px;font-size:10px;line-height:10px;font-weight:400;color:#000;letter-spacing:-0.2px;">6% - 4,25h</div>
<div class="r" style="left:1127px;top:509px;width:126px;height:28px;border:1px solid #a0a0a0;background:#fff;"></div>
<div class="t " style="left:890.5px;width:600px;text-align:center;top:510.99px;font-size:11px;line-height:11px;font-weight:400;color:#000;">Stedtstraße 23 » Akquise</div>
<div class="t " style="left:889.3px;width:600px;text-align:center;top:524.03px;font-size:10px;line-height:10px;font-weight:400;color:#000;letter-spacing:-0.2px;">27% - 18,30h</div>
<svg style="left:1545px;top:130px" width="17" height="85">
<path d="M2.6 14.4 V1.6 H9.6 L13.4 5.4 V9.5" fill="none" stroke="#1a1a1a" stroke-width="1.3"/>
<path d="M9.6 1.6 V5.4 H13.4" fill="none" stroke="#1a1a1a" stroke-width="1.1"/>
<path d="M2.6 14.4 H7" fill="none" stroke="#1a1a1a" stroke-width="1.3"/>
<circle cx="7" cy="8.4" r="3.1" fill="#f4f8ff" stroke="#1a1a1a" stroke-width="1.3"/>
<path d="M9.3 10.7 L13.2 14.3" stroke="#1a1a1a" stroke-width="2"/>
<g transform="translate(1,23)"><rect x="3.5" y="0.5" width="7.5" height="5.5" fill="#fff" stroke="#3b97d9" stroke-width="1"/><rect x="5" y="2.2" width="4.5" height="0.9" fill="#3b97d9"/><rect x="5" y="3.9" width="4.5" height="0.9" fill="#3b97d9"/>
<rect x="0.6" y="6" width="13.4" height="7" rx="2" fill="#1a1a1a"/><rect x="2" y="9.4" width="10.6" height="2" fill="#fff"/></g>
<g transform="translate(1.5,46)"><rect x="0" y="0" width="13.2" height="12.2" fill="#1a1a1a"/><rect x="2.2" y="0.9" width="8.8" height="4.6" fill="#fff"/><rect x="2.2" y="0.2" width="8.8" height="1" fill="#3b97d9"/><rect x="8" y="8.6" width="1.8" height="2.4" fill="#fff"/></g>
<g transform="translate(1,66)"><rect x="0.6" y="0.6" width="7" height="10.5" fill="#fff" stroke="#3b97d9" stroke-width="1.1"/><path d="M2.2 3 H6 M2.2 5 H6 M2.2 7 H6" stroke="#3b97d9" stroke-width="0.7" stroke-dasharray="1 1"/>
<path d="M4.3 14.4 V3.9 H10.7 L14 7.2 V14.4 Z" fill="#fff" stroke="#1a1a1a" stroke-width="1.3"/><path d="M10.4 3.9 V7.4 H14" fill="none" stroke="#1a1a1a" stroke-width="1"/>
<path d="M6.2 8.6 H12.2 M6.2 10.5 H12.2 M6.2 12.4 H12.2" stroke="#1a1a1a" stroke-width="1"/></g>
</svg>
<div class="r" style="left:0px;top:0px;width:1px;height:552px;background:#1a82da;"></div>
<div class="r" style="left:1px;top:1px;width:1px;height:551px;background:#d6cfc8;"></div>
<div class="r" style="left:198px;top:22px;width:55px;height:45px;border:2px solid rgba(0,0,0,0.33);filter:blur(2.2px);"></div>
<div class="r" style="left:194px;top:18px;width:55px;height:45px;border:2px solid #c00000;"></div>
<div class="r" style="left:389px;top:24px;width:64px;height:44px;border:2px solid rgba(0,0,0,0.33);filter:blur(2.2px);"></div>
<div class="r" style="left:385px;top:20px;width:64px;height:44px;border:2px solid #c00000;"></div>
<svg style="left:0;top:0" width="1569" height="552">
<defs><filter id="sh" x="-10%" y="-10%" width="130%" height="130%"><feGaussianBlur stdDeviation="2.2"/></filter></defs>
<g transform="translate(4,4)" opacity="0.45" filter="url(#sh)"><path d="M276 79 L800 301.5" stroke="#000" stroke-width="3"/><polygon points="813.5,306.7 802.6,294 796.7,307.6" fill="#000"/></g>
<path d="M276 79 L800 301.5" stroke="#c00000" stroke-width="3.2"/>
<polygon points="813.5,306.7 802.6,294 796.7,307.6" fill="#c00000"/>
</svg>
</body></html>
